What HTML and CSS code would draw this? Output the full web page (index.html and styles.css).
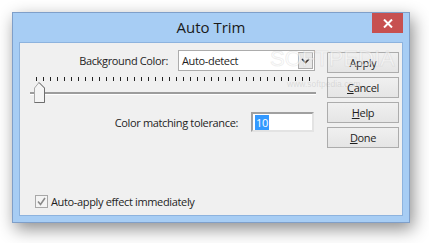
FILE: index.html
```html
<!DOCTYPE html>
<html lang="en">
<head>
  <meta charset="UTF-8">
  <title>Auto Trim</title>
  <link rel="stylesheet" href="styles.css">
</head>
<body>
  <div class="window">
    <div class="titlebar">
      <span></span>
      <span class="title">Auto Trim</span>
      <button class="close" aria-label="Close">
        <svg width="10" height="9" viewBox="0 0 10 9"><path d="M1 0.5 L9 8.5 M9 0.5 L1 8.5" stroke="#fff" stroke-width="2"/></svg>
      </button>
    </div>

    <div class="client">
      <div class="main">
        <div class="row row-bg">
          <label>Background Color:</label>
          <div class="combo">
            <span>Auto-detect</span>
            <span class="combo-btn">
              <svg width="9" height="6" viewBox="0 0 9 6"><path d="M1 1 L4.5 4.5 L8 1" fill="none" stroke="#333" stroke-width="1.6"/></svg>
            </span>
          </div>
        </div>

        <div class="slider">
          <div class="ticks"></div>
          <div class="track"></div>
          <svg class="thumb" width="11" height="21" viewBox="0 0 11 21">
            <path d="M0.5 6 L5 0.5 L10.5 6 L10.5 20.5 L0.5 20.5 Z" fill="#f4f4f4" stroke="#a8a8a8"/>
            <path d="M5 0.5 L10.5 6 L10.5 20.5 L0.5 20.5" fill="none" stroke="#6e6e6e"/>
          </svg>
        </div>

        <div class="row row-tol">
          <label>Color matching tolerance:</label>
          <div class="edit"><span class="sel">10</span></div>
        </div>

        <div class="check-row">
          <span class="checkbox">
            <svg width="9" height="9" viewBox="0 0 9 9"><path d="M1 4.5 L3.5 7.5 L8 1" fill="none" stroke="#8a8a8a" stroke-width="1.6"/></svg>
          </span>
          <span>Auto-apply effect immediately</span>
        </div>
      </div>

      <div class="buttons">
        <button class="btn">Apply</button>
        <button class="btn"><u>C</u>ancel</button>
        <button class="btn"><u>H</u>elp</button>
        <button class="btn"><u>D</u>one</button>
      </div>

      <div class="watermark">SOFTPEDIA<small>www.softpedia.com</small></div>
    </div>
  </div>
</body>
</html>
```

FILE: styles.css
```css
body {
  margin: 0;
  background: #fff;
  width: 429px;
  height: 243px;
  overflow: hidden;
  font-family: "Open Sans", sans-serif;
  font-size: 11px;
  letter-spacing: -0.35px;
  color: #1e1e1e;
}

.window {
  position: absolute;
  left: 12px;
  top: 12px;
  width: 398px;
  height: 211px;
  box-sizing: border-box;
  background: #a7cdf4;
  border: 1px solid #7f9fc9;
  box-shadow: 3px 6px 16px rgba(0, 0, 0, 0.45);
  display: flex;
  flex-direction: column;
}

.titlebar {
  height: 29px;
  display: grid;
  grid-template-columns: 1fr auto 1fr;
}

.title {
  font-size: 15px;
  letter-spacing: 0;
  line-height: 29px;
  color: #1a1a1a;
}

.close {
  justify-self: end;
  margin-right: 6px;
  width: 31px;
  height: 20px;
  padding: 0;
  border: none;
  background: #c75050;
  display: flex;
  align-items: center;
  justify-content: center;
}

.client {
  position: relative;
  flex: 1;
  margin: 0 6px 6px;
  background: #f0f0f0;
  border: 1px solid #8db3de;
  display: grid;
  grid-template-columns: 286px 72px;
  column-gap: 11px;
  padding: 7px 2px 0 10px;
}

.main {
  display: flex;
  flex-direction: column;
}

.row {
  display: flex;
  justify-content: flex-end;
  align-items: center;
}

.row-bg { gap: 10px; padding-right: 1px; }
.row-tol { gap: 13px; padding-right: 2px; margin-top: 9px; }

.combo {
  width: 137px;
  height: 21px;
  box-sizing: border-box;
  background: #fff;
  border: 1px solid #acacac;
  display: flex;
  align-items: center;
  justify-content: space-between;
  padding: 0 1px 0 3px;
}

.combo-btn {
  width: 15px;
  height: 17px;
  box-sizing: border-box;
  border: 1px solid #acacac;
  background: #e8e8e8;
  display: flex;
  align-items: center;
  justify-content: center;
}

.slider {
  position: relative;
  height: 26px;
  margin-top: 6px;
}

.ticks {
  height: 4px;
  margin: 0 3px 0 6px;
  background: repeating-linear-gradient(to right, #222 0 1px, transparent 1px 7px);
}

.track {
  height: 2px;
  margin-top: 11px;
  background: #9c9c9c;
  border-bottom: 1px solid #fff;
}

.thumb {
  position: absolute;
  left: 4px;
  top: 5px;
}

.edit {
  width: 63px;
  height: 20px;
  box-sizing: border-box;
  background: #fff;
  border: 2px solid;
  border-color: #a0a0a0 #e3e3e3 #e3e3e3 #a0a0a0;
  padding: 1px 2px;
}

.sel {
  background: #3399ff;
  color: #fff;
  padding: 0 1px;
}

.check-row {
  margin-top: auto;
  margin-bottom: 6px;
  padding-left: 5px;
  display: flex;
  align-items: center;
  gap: 3px;
}

.checkbox {
  width: 13px;
  height: 13px;
  box-sizing: border-box;
  border: 1px solid #a8a8a8;
  background: #f4f4f4;
  display: flex;
  align-items: center;
  justify-content: center;
}

.buttons {
  display: flex;
  flex-direction: column;
  gap: 4px;
  margin-top: 2px;
}

.btn {
  height: 21px;
  padding: 0;
  font-family: inherit;
  font-size: 11px;
  letter-spacing: inherit;
  color: #1e1e1e;
  background: linear-gradient(#f0f0f0, #e5e5e5);
  border: 1px solid #acacac;
}

.watermark {
  position: absolute;
  left: 250px;
  top: 5px;
  font-family: "Liberation Sans", sans-serif;
  font-size: 22px;
  letter-spacing: 0;
  color: rgba(255, 255, 255, 0.55);
  -webkit-text-stroke: 1px rgba(170, 170, 170, 0.2);
  pointer-events: none;
  line-height: 22px;
}

.watermark small {
  display: block;
  font-size: 8.5px;
  line-height: 10px;
  margin: 9px 0 0 17px;
  -webkit-text-stroke: 0;
  color: rgba(150, 150, 150, 0.25);
}
```
